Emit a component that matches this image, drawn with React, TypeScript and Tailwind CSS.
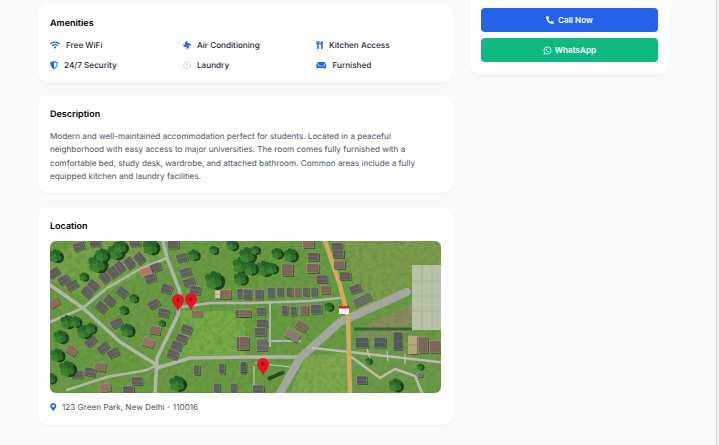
import { FaWifi, FaFan, FaUtensils, FaCouch, FaPhone, FaWhatsapp, FaMapMarkerAlt, FaShieldAlt } from "react-icons/fa";

type H = [number, number, number, string?, number?, number?];
const z4: H[] = [[115,35,-20],[165,22,0],[285,22,0],[400,28,0],[425,68,-15],[300,68,50],[270,82,50],[240,95,50],[220,110,50],[195,125,50],[345,98,-20],[318,110,-20,"#b9765a"],[330,130,-15],[435,112,-20],[445,142,-20],[465,165,10],[380,160,20],[160,150,40],[142,170,40],[95,152,-30],[70,135,-30],[40,115,-40],[210,195,40],[185,215,40],[248,170,40],[340,208,-30],[370,232,10],[228,265,-30],[345,285,10,"#8a6a58"],[325,322,20,"#9b6f5c"],[440,282,20],[425,310,20],[410,332,20],[398,357,20],[150,320,-40],[95,345,30,"#8a6a58"],[188,340,-40],[218,355,-30],[150,410,10],[180,395,10,"#8a6a58"],[110,418,0],[290,438,0],[195,458,-10,"#9b6f5c"],[265,465,0],[40,205,-30,"#8a6a58"],[470,235,0,"#8a6a58",11,6],[557,178,0,"#8a6a58",10,9],[600,175,0,"#5c5f60",6,9],[622,175,0,"#5c5f60",6,9],[533,178,0,"#c9c9c0",5,8],[605,235,0,"#6a5a55",13,7],[607,325,0,"#6a5a55",12,13],[470,405,0,"#5c5f60",6,10],[545,400,0,"#5c5f60",6,10],[608,400,0,"#5c5f60",6,10],[530,458,0,"#5c5f60",6,9],[580,458,0,"#5c5f60",6,9]];
const z5: H[] = [[290,35,0],[295,57,0],[205,27,0,"#8a6a58"],[220,65,0],[142,105,0,"#7d6558",11,12],[218,100,0,"#7d6558",12,9],[298,90,0,"#7d6558"],[315,123,0],[245,132,0],[345,162,-20],[365,195,-25,"#6a6a66",18,8],[22,178,0,"#5c5f60",8,10],[57,178,0,"#5c5f60",8,10],[92,172,0,"#5c5f60",7,10],[120,170,0,"#5c5f60",6,9],[148,170,0,"#5c5f60",6,9],[172,170,0,"#7d6558",6,9],[197,170,0,"#5c5f60",6,9],[222,170,0,"#5c5f60",6,9],[255,165,0,"#7d6558",9,8],[15,235,0,"#7d6558",12,7],[62,228,0,"#5c5f60",9,7],[133,225,0,"#5c5f60",6,9],[160,228,0,"#5c5f60",6,9],[192,225,0,"#7d6558",8,9],[228,222,0,"#5c5f60",11,9],[65,265,0],[60,290,0],[185,272,30,"#7d6558",12,8],[158,300,30,"#8a7a70",14,9],[65,330,0,"#6a6a66",11,12],[12,325,0,"#7d6558",9,13],[365,322,0,"#55585a",13,10],[420,322,0,"#55585a",12,10],[473,318,0,"#55585a",9,18],[518,330,0,"#b3a47c",9,18],[550,330,0,"#7d6558",9,16],[585,335,0,"#7d6558",11,12],[365,435,0,"#55585a",10,8],[540,420,0,"#6a6a66",5,4],[10,395,0,"#55585a",6,10],[55,462,0]];
const trees4 = [[45,62,6],[225,50,7],[240,35,6],[330,35,7],[170,85,8],[185,60,6],[130,125,4],[520,135,8],[600,90,7],[575,30,5],[520,45,4],[460,60,5],[280,190,4],[250,225,4],[260,285,6],[130,290,6],[150,280,5],[60,305,6],[80,260,6],[105,260,5],[50,360,6],[80,400,7],[30,430,5],[410,445,7],[365,265,3]];
const trees5 = [[20,60,7],[70,100,7],[110,55,5],[150,60,6],[30,100,6],[265,215,4],[385,378,3],[540,395,3],[465,450,6],[0,130,6],[95,100,5],[45,45,4]];
const Tree = ({ x, y, r }: { x: number; y: number; r: number }) => {
  const blobs = [[0,0,0.62],[-0.55,-0.3,0.5],[0.5,-0.45,0.5],[-0.45,0.5,0.48],[0.55,0.4,0.5],[0,-0.75,0.38],[0,0.8,0.36]];
  return (
    <g>
      <circle cx={x + r * 0.5} cy={y + r * 0.25} r={r} fill="#1d3d1c" />
      {blobs.map(([dx, dy, s], i) => <circle key={i} cx={x + dx * r} cy={y + dy * r} r={s * r} fill={i % 3 === 0 ? "#3c8232" : i % 3 === 1 ? "#2f7029" : "#28602a"} />)}
    </g>
  );
};
const Pin = ({ x, y }: { x: number; y: number }) => (
  <g transform={`translate(${x - 6} ${y - 18})`}>
    <path d="M6 18C5 13 0 10.500 0 6a6 6 0 0 1 12 0C12 10.500 7 13 6 18Z" fill="#ed0f1e" />
    <circle cx="6" cy="6" r="1.600" fill="#5a0a10" />
  </g>
);
const Road = ({ d, w = 3, c = "#b2b6ab" }: { d: string; w?: number; c?: string }) => (
  <path d={d} fill="none" stroke={c} strokeWidth={w} strokeLinejoin="round" strokeLinecap="round" />
);
const house = (h: H, i: number, ox: number) => {
  const [zx, zy, r, c = "#5f5c5a", w = 11, ht = 8] = h;
  const x = ox + zx / 3, y = zy / 3 - 6;
  return (
    <g key={i} transform={`rotate(${r} ${x} ${y})`}>
      <rect x={x - w / 2 + 1} y={y - ht / 2 + 1} width={w} height={ht} fill="#24301e" opacity="0.700" />
      <rect x={x - w / 2} y={y - ht / 2} width={w} height={ht} fill={c} stroke="#bdb9ad" strokeWidth="0.300" />
      <path d={`M${x - w / 2} ${y}H${x + w / 2}`} stroke="#7d7a74" strokeWidth="0.500" />
    </g>
  );
};
function MapArt() {
  return (
    <svg viewBox="0 0 391 152" className="block w-full h-full" preserveAspectRatio="none">
      <defs>
        <filter id="b" x="-2%" y="-2%" width="104%" height="104%"><feGaussianBlur stdDeviation="0.500" /></filter>
        <filter id="n" x="0" y="0" width="100%" height="100%">
          <feTurbulence type="fractalNoise" baseFrequency="0.22" numOctaves="3" seed="4" />
          <feColorMatrix values="0 0 0 0 0.08  0 0 0 0 0.22  0 0 0 0 0.06  1.800 0 0 0 -0.650" />
        </filter>
      </defs>
      <g filter="url(#b)">
        <rect width="391" height="152" fill="#6a9b40" />
        <rect x="130" y="70" width="65" height="46" fill="#78ac42" />
        <path d="M295 0H391V40L310 74Z" fill="#7f9c4c" />
        <path d="M315 85L362 62V92L310 95Z" fill="#8d8c62" />
        <path d="M300 95H391V152H300Z" fill="#6e9a48" />
        <path d="M255 115L298 112V152H240Z" fill="#82a84a" />
        <path d="M0 10L60 0H120L115 20L40 60L0 40Z" fill="#76a446" />
        <rect width="391" height="152" filter="url(#n)" opacity="0.550" />
        <rect x="362" y="24" width="29" height="65" fill="#b8c2a8" />
        <path d="M362 40H391M362 55H391M362 70H391M372 24V89M382 24V89" stroke="#a3b092" strokeWidth="0.800" />
        <path d="M304 88L362 88" stroke="#2f6a2a" strokeWidth="3" />
        <Road d="M0 44L33 67L70 101L107 124" w={3.500} />
        <Road d="M117 17L90 28L57 47L33 67L0 81" w={2.500} />
        <Road d="M113 0L117 17L130 51L128 74L107 117L105 152" w={3.500} />
        <Road d="M107 127L140 117L200 116H250" w={3.500} />
        <Road d="M17 149L57 136L97 129L107 124" w={2.500} />
        <Road d="M133 66L160 62H200L260 60L290 57" w={2.500} />
        <Road d="M230 152L250 117L290 81L357 51" w={8} c="#a2a8a0" />
        <Road d="M263 107L300 111L397 122" w={2.500} c="#bcbdae" />
        <Road d="M300 115L330 137L345 128L365 135L372 152" w={2.500} c="#bcbdae" />
        <Road d="M207 100H250M220 62V105" w={2} c="#b2b6ab" />
        <Road d="M275 0L290 44L298 77L300 152" w={4.500} c="#aeb0a5" />
        <Road d="M275 0L290 44L298 77L300 152" w={2.200} c="#f2a81d" />
        <path d="M317 108L320 118M337 110L338 120M355 113L355 123M204 125V150M205 122L240 126" stroke="#c8c9b8" strokeWidth="1.200" fill="none" />
        {z4.map((h, i) => house(h, i, -10))}
        {z5.map((h, i) => house(h, i + 100, 190))}
        {trees4.map(([x, y, r], i) => <Tree key={i} x={x / 3 - 10} y={y / 3 - 6} r={r} />)}
        {trees5.map(([x, y, r], i) => <Tree key={i} x={x / 3 + 190} y={y / 3 - 6} r={r} />)}
        <rect x="289" y="65" width="10" height="8" fill="#f4f4f0" />
        <rect x="289" y="65" width="10" height="2.500" fill="#d8202a" />
        <path d="M218 138L234 131" stroke="#2b4a22" strokeWidth="4" />
      </g>
      <Pin x={128} y={71} />
      <Pin x={141} y={70} />
      <Pin x={213} y={135} />
    </svg>
  );
}
const Item = ({ icon, label }: { icon: React.ReactNode; label: string }) => (
  <div className="flex items-center h-[20px] gap-[6px]">
    <span className="text-[#2563eb] flex items-center">{icon}</span>
    <span>{label}</span>
  </div>
);
const Laundry = () => (
  <svg viewBox="0 0 10 10" className="w-[8px] h-[9px] text-[#7f9ef0]" fill="none" stroke="currentColor" strokeWidth="0.800">
    <circle cx="5" cy="5" r="4.200" strokeDasharray="1.500 0.500" />
    <path d="M5 2.500V6M5 7V7.800" />
  </svg>
);
const Card = ({ className = "", children }: { className?: string; children: React.ReactNode }) => (
  <div className={`bg-white rounded-[10px] shadow-[0_1px_2px_rgba(0,0,0,0.05)] ${className}`}>{children}</div>
);
export default function App() {
  return (
    <div className="w-[719px] h-[445px] overflow-hidden bg-[#f5f5f7]">
      <div className="w-[717px] h-full border-r border-[#cfcfd4] bg-[#f9fafb] flex items-start pl-[38px] gap-[17px] font-['Inter',sans-serif] text-[#1f2937] [text-rendering:geometricPrecision]">
        <div className="w-[415px] flex flex-col pt-[4px]">
          <Card className="h-[79px] px-[12px] pt-[13px]">
            <h2 className="text-[9px] leading-[14px] font-semibold text-black">Amenities</h2>
            <div className="grid grid-cols-[133px_133px_1fr] mt-[4px] text-[8.160px] font-medium">
              <Item icon={<FaWifi className="w-[10px] h-[8px]" />} label="Free WiFi" />
              <Item icon={<FaFan className="w-[8px] h-[8px]" />} label="Air Conditioning" />
              <Item icon={<FaUtensils className="w-[7px] h-[8px]" />} label="Kitchen Access" />
              <Item icon={<FaShieldAlt className="w-[8px] h-[8px]" />} label="24/7 Security" />
              <Item icon={<Laundry />} label="Laundry" />
              <Item icon={<FaCouch className="w-[10.500px] h-[8.500px]" />} label="Furnished" />
            </div>
          </Card>
          <Card className="mt-[12px] h-[98px] px-[12px] pt-[13px]">
            <h2 className="text-[9px] leading-[14px] font-semibold text-black">Description</h2>
            <p className="mt-[8px] text-[8.160px] leading-[13.300px] text-[#4b5563]">
              Modern and well-maintained accommodation perfect for students. Located in a peaceful neighborhood with easy access to major universities. The room comes fully furnished with a comfortable bed, study desk, wardrobe, and attached bathroom. Common areas include a fully equipped kitchen and laundry facilities.
            </p>
          </Card>
          <Card className="mt-[14px] h-[218px] px-[12px] pt-[13px]">
            <h2 className="text-[9px] leading-[14px] font-semibold text-black">Location</h2>
            <div className="mt-[7px] h-[152px] rounded-[6px] overflow-hidden"><MapArt /></div>
            <div className="mt-[8px] flex items-center gap-[5.500px] text-[8.160px] text-[#4b5563]">
              <FaMapMarkerAlt className="text-[#2563eb] w-[6.500px] h-[8px]" />
              <span>123 Green Park, New Delhi - 110016</span>
            </div>
          </Card>
        </div>
        <Card className="w-[199px] h-[75px] rounded-t-none px-[11px] pt-[8px] flex flex-col gap-[6px]">
          <button className="h-[24px] rounded-[4px] bg-[#2563eb] text-white text-[8.160px] font-semibold flex items-center justify-center gap-[4px]"><FaPhone className="text-[8px] -scale-x-100" />Call Now</button>
          <button className="h-[24px] rounded-[4px] bg-[#10b981] text-white text-[8.160px] font-semibold flex items-center justify-center gap-[3px]"><FaWhatsapp className="text-[9px]" />WhatsApp</button>
        </Card>
      </div>
    </div>
  );
}
